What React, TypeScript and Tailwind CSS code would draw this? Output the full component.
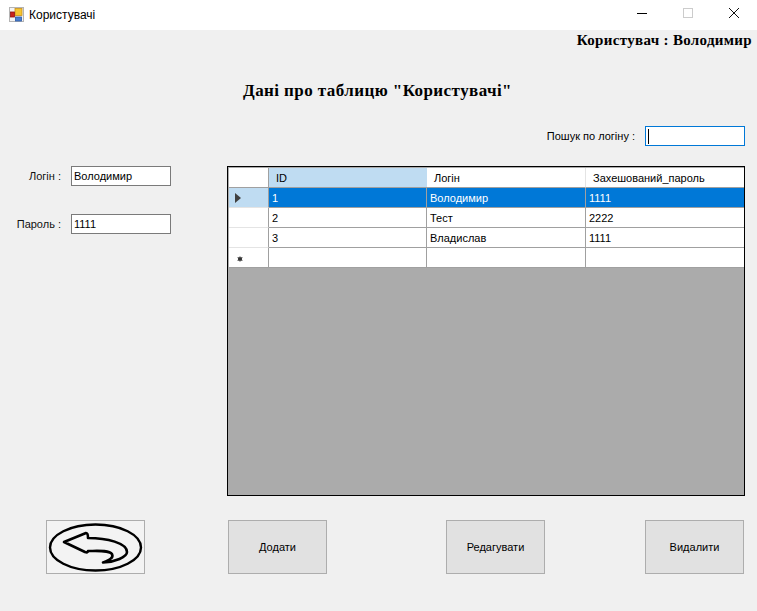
const rows = [
  { id: '1', login: 'Володимир', pass: '1111', selected: true },
  { id: '2', login: 'Тест', pass: '2222', selected: false },
  { id: '3', login: 'Владислав', pass: '1111', selected: false },
];

function FormIcon() {
  return (
    <svg width="16" height="16" viewBox="0 0 16 16" className="shrink-0">
      <rect x="0.5" y="0.5" width="14" height="14" fill="#f4f4f4" stroke="#b4b4b4" />
      <rect x="6" y="1.5" width="7" height="7" fill="#f5c531" stroke="#c98f1a" strokeWidth="0.8" />
      <rect x="1.5" y="5" width="4" height="5" fill="#c8221c" stroke="#8f1512" strokeWidth="0.8" />
      <rect x="6.5" y="10" width="6" height="4" fill="#4a7fd0" stroke="#2d5aa6" strokeWidth="0.8" />
    </svg>
  );
}

function WindowControls() {
  return (
    <div className="flex items-center">
      <svg width="46" height="30" viewBox="0 0 46 30">
        <path d="M18 13.5h10" stroke="#000" fill="none" />
      </svg>
      <svg width="46" height="30" viewBox="0 0 46 30">
        <rect x="18.5" y="8.5" width="9" height="9" stroke="#cccccc" fill="none" />
      </svg>
      <svg width="46" height="30" viewBox="0 0 46 30">
        <path d="M18 8l10 10M28 8L18 18" stroke="#111" fill="none" />
      </svg>
    </div>
  );
}

function BackIcon() {
  return (
    <svg width="97" height="52" viewBox="0 0 97 52">
      <rect width="97" height="52" fill="#f3f3f3" />
      <ellipse cx="48.5" cy="26.5" rx="45.5" ry="23" fill="none" stroke="#000" strokeWidth="2.4" />
      <path
        d="M17 21 L39 12 Q41 12 41 17 C60 17 80 22 80 31 C80 36 68 41 56 41.5 C62 39 67 37 65 33 C62 29 50 30 41 30 Q41 32 38 31 Z"
        fill="none"
        stroke="#000"
        strokeWidth="2.6"
        strokeLinejoin="round"
      />
    </svg>
  );
}

function Field({ label, value }: { label: string; value: string }) {
  return (
    <div className="flex items-center h-5">
      <span className="w-[61px] text-right text-[#111]">{label}</span>
      <div className="ml-[10px] w-[100px] h-5 bg-white border border-[#7a7a7a] px-[2px] leading-[18px]">{value}</div>
    </div>
  );
}

function ActionButton({ label }: { label: string }) {
  return (
    <button className="w-[99px] h-[54px] bg-[#e1e1e1] border border-[#adadad] text-[11px] text-black">{label}</button>
  );
}

export default function App() {
  return (
    <div className="w-[757px] h-[611px] overflow-hidden bg-[#f0f0f0] text-[11px] text-black font-['Liberation_Sans',sans-serif]">
      {/* Title bar */}
      <div className="h-[30px] bg-white flex items-center justify-between">
        <div className="flex items-center pl-[9px] gap-[4px] text-[12px]">
          <FormIcon />
          <span>Користувачі</span>
        </div>
        <WindowControls />
      </div>

      {/* User + heading */}
      <div className="h-[21px] pr-[5px] text-right font-['Liberation_Serif',serif] font-bold text-[15px] tracking-[0.32px] leading-[21px]">
        Користувач : Володимир
      </div>
      <div className="mt-[29px] h-[22px] pl-[243px] font-['Liberation_Serif',serif] font-bold text-[17px] tracking-[0.43px] leading-[22px]">
        Дані про таблицю "Користувачі"
      </div>

      {/* Search */}
      <div className="mt-[24px] h-5 flex justify-end items-center pr-3">
        <span>Пошук по логіну :</span>
        <div className="ml-[10px] w-[100px] h-5 bg-white border border-[#0078d7] flex items-center pl-[2px]">
          <div className="w-px h-[15px] bg-black" />
        </div>
      </div>

      {/* Main area */}
      <div className="mt-5 flex">
        <div className="w-[227px] flex flex-col gap-7">
          <Field label="Логін :" value="Володимир" />
          <Field label="Пароль :" value="1111" />
        </div>

        <div className="w-[518px] h-[330px] border border-black bg-[#ababab] pt-px pl-px">
          <div className="grid grid-cols-[40px_158px_159px_1fr] bg-white">
            <div className="h-5 border-r border-b border-[#a0a0a0]" />
            <div className="h-5 bg-[#bfdcf2] pl-[7px] leading-[20px] border-b border-[#a0a0a0]">ID</div>
            <div className="h-5 pl-[7px] leading-[20px] border-r border-b border-r-[#e4e4e4] border-b-[#a0a0a0]">Логін</div>
            <div className="h-5 pl-[7px] leading-[20px] border-b border-[#a0a0a0]">Захешований_пароль</div>
            {rows.map((r) => {
              const cell = r.selected
                ? 'h-5 bg-[#0078d7] text-white pl-[3px] leading-[20px] border-r border-b border-[#a0a0a0]'
                : 'h-5 bg-white pl-[3px] leading-[20px] border-r border-b border-[#a0a0a0]';
              const lastCell = r.selected
                ? 'h-5 bg-[#0078d7] text-white pl-[3px] leading-[20px] border-b border-[#a0a0a0]'
                : 'h-5 bg-white pl-[3px] leading-[20px] border-b border-[#a0a0a0]';
              return (
                <div key={r.id} className="contents">
                  <div className={r.selected ? 'h-5 bg-[#bfdcf2] border-r border-b border-r-[#a0a0a0] border-b-[#e4e4e4] flex items-center pl-[6px]' : 'h-5 bg-white border-r border-b border-r-[#a0a0a0] border-b-[#e4e4e4]'}>
                    {r.selected && (
                      <svg width="6" height="10" viewBox="0 0 6 10">
                        <path d="M0 0l6 5-6 5z" fill="#404040" />
                      </svg>
                    )}
                  </div>
                  <div className={cell}>{r.id}</div>
                  <div className={cell}>{r.login}</div>
                  <div className={lastCell}>{r.pass}</div>
                </div>
              );
            })}
            <div className="h-5 bg-white border-r border-b border-r-[#a0a0a0] border-b-[#a0a0a0] flex items-center pl-[8px] pt-[2px]">
              <svg width="6" height="6" viewBox="0 0 6 6">
                <path d="M3 0l.8 1.4L5.6 1 4.8 3l.8 2-1.8-.4L3 6l-.8-1.4L.4 5l.8-2-.8-2 1.8.4z" fill="#333" />
              </svg>
            </div>
            <div className="h-5 border-r border-b border-[#a0a0a0]" />
            <div className="h-5 border-r border-b border-[#a0a0a0]" />
            <div className="h-5 border-b border-[#a0a0a0]" />
          </div>
        </div>
      </div>

      {/* Bottom buttons */}
      <div className="mt-6 flex pl-[46px]">
        <button className="w-[99px] h-[54px] border border-[#adadad] flex items-center justify-center">
          <BackIcon />
        </button>
        <div className="ml-[83px]"><ActionButton label="Додати" /></div>
        <div className="ml-[119px]"><ActionButton label="Редагувати" /></div>
        <div className="ml-[100px]"><ActionButton label="Видалити" /></div>
      </div>
    </div>
  );
}
